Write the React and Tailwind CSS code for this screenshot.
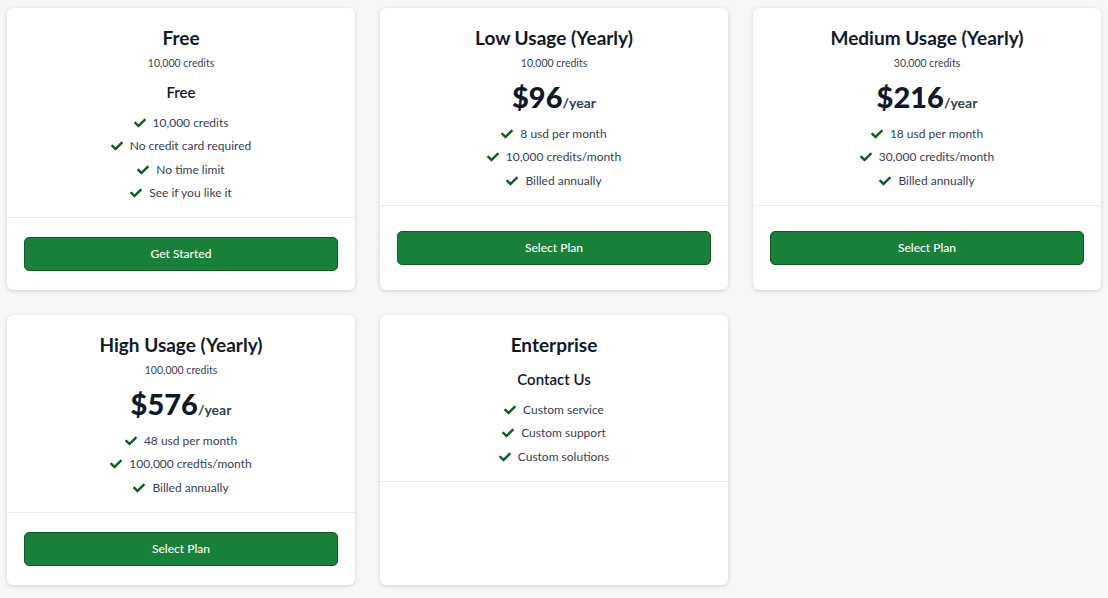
import React from 'react';
import { FaCheck } from 'react-icons/fa';

// Plans shown on the pricing page
const plans = [
  {
    name: 'Free',
    credits: '10,000 credits',
    label: 'Free',
    features: ['10,000 credits', 'No credit card required', 'No time limit', 'See if you like it'],
    cta: 'Get Started',
  },
  {
    name: 'Low Usage (Yearly)',
    credits: '10,000 credits',
    price: '$96',
    features: ['8 usd per month', '10,000 credits/month', 'Billed annually'],
    cta: 'Select Plan',
  },
  {
    name: 'Medium Usage (Yearly)',
    credits: '30,000 credits',
    price: '$216',
    features: ['18 usd per month', '30,000 credits/month', 'Billed annually'],
    cta: 'Select Plan',
  },
  {
    name: 'High Usage (Yearly)',
    credits: '100,000 credits',
    price: '$576',
    features: ['48 usd per month', '100,000 credtis/month', 'Billed annually'],
    cta: 'Select Plan',
  },
  {
    name: 'Enterprise',
    label: 'Contact Us',
    features: ['Custom service', 'Custom support', 'Custom solutions'],
  },
];

const PlanCard = ({ plan }) => (
  <div className="flex flex-col rounded-md bg-white shadow-[0_1px_4px_rgba(0,0,0,0.16)]">
    <div className="flex flex-col items-center px-4 pt-4 pb-[12px] border-b border-[#ececec]">
      <h3 className="text-[19px] leading-7 font-bold text-[#111827]">{plan.name}</h3>
      {plan.credits && (
        <p className="text-[10.5px] leading-4 text-[#374151] mt-[3px]">{plan.credits}</p>
      )}
      {plan.price && (
        <div className="mt-[10px] flex items-baseline">
          <span className="text-[29px] leading-8 font-black text-[#111827]">{plan.price}</span>
          <span className="text-[14px] font-bold text-[#374151]">/year</span>
        </div>
      )}
      {plan.label && (
        <p className={`${plan.credits ? 'mt-[9px]' : 'mt-[8px]'} text-[15px] leading-6 font-semibold text-[#111827]`}>
          {plan.label}
        </p>
      )}
      <ul className={`${plan.price ? 'mt-[9px]' : 'mt-[7px]'} flex flex-col items-center`}>
        {plan.features.map((f) => (
          <li key={f} className="flex items-center gap-[7px] h-[23.5px] text-[12px] text-[#374151]">
            <FaCheck className="text-[#0f5c29]" size={12} />
            <span>{f}</span>
          </li>
        ))}
      </ul>
    </div>
    <div className="flex-1 flex items-center px-[17px] py-[19px]">
      {plan.cta && (
        <button className="w-full h-[34px] rounded-[5px] bg-[#198039] border border-[#0f5a26] text-white text-[12px] font-medium">
          {plan.cta}
        </button>
      )}
    </div>
  </div>
);

const App = () => (
  <div
    className="min-h-screen bg-[#f7f7f8] px-[7px] pt-[8px] pb-3"
    style={{ fontFamily: 'Lato, "Open Sans", sans-serif' }}
  >
    <div className="grid grid-cols-3 gap-[25px]">
      {plans.map((p) => (
        <PlanCard key={p.name} plan={p} />
      ))}
    </div>
  </div>
);

export default App;
